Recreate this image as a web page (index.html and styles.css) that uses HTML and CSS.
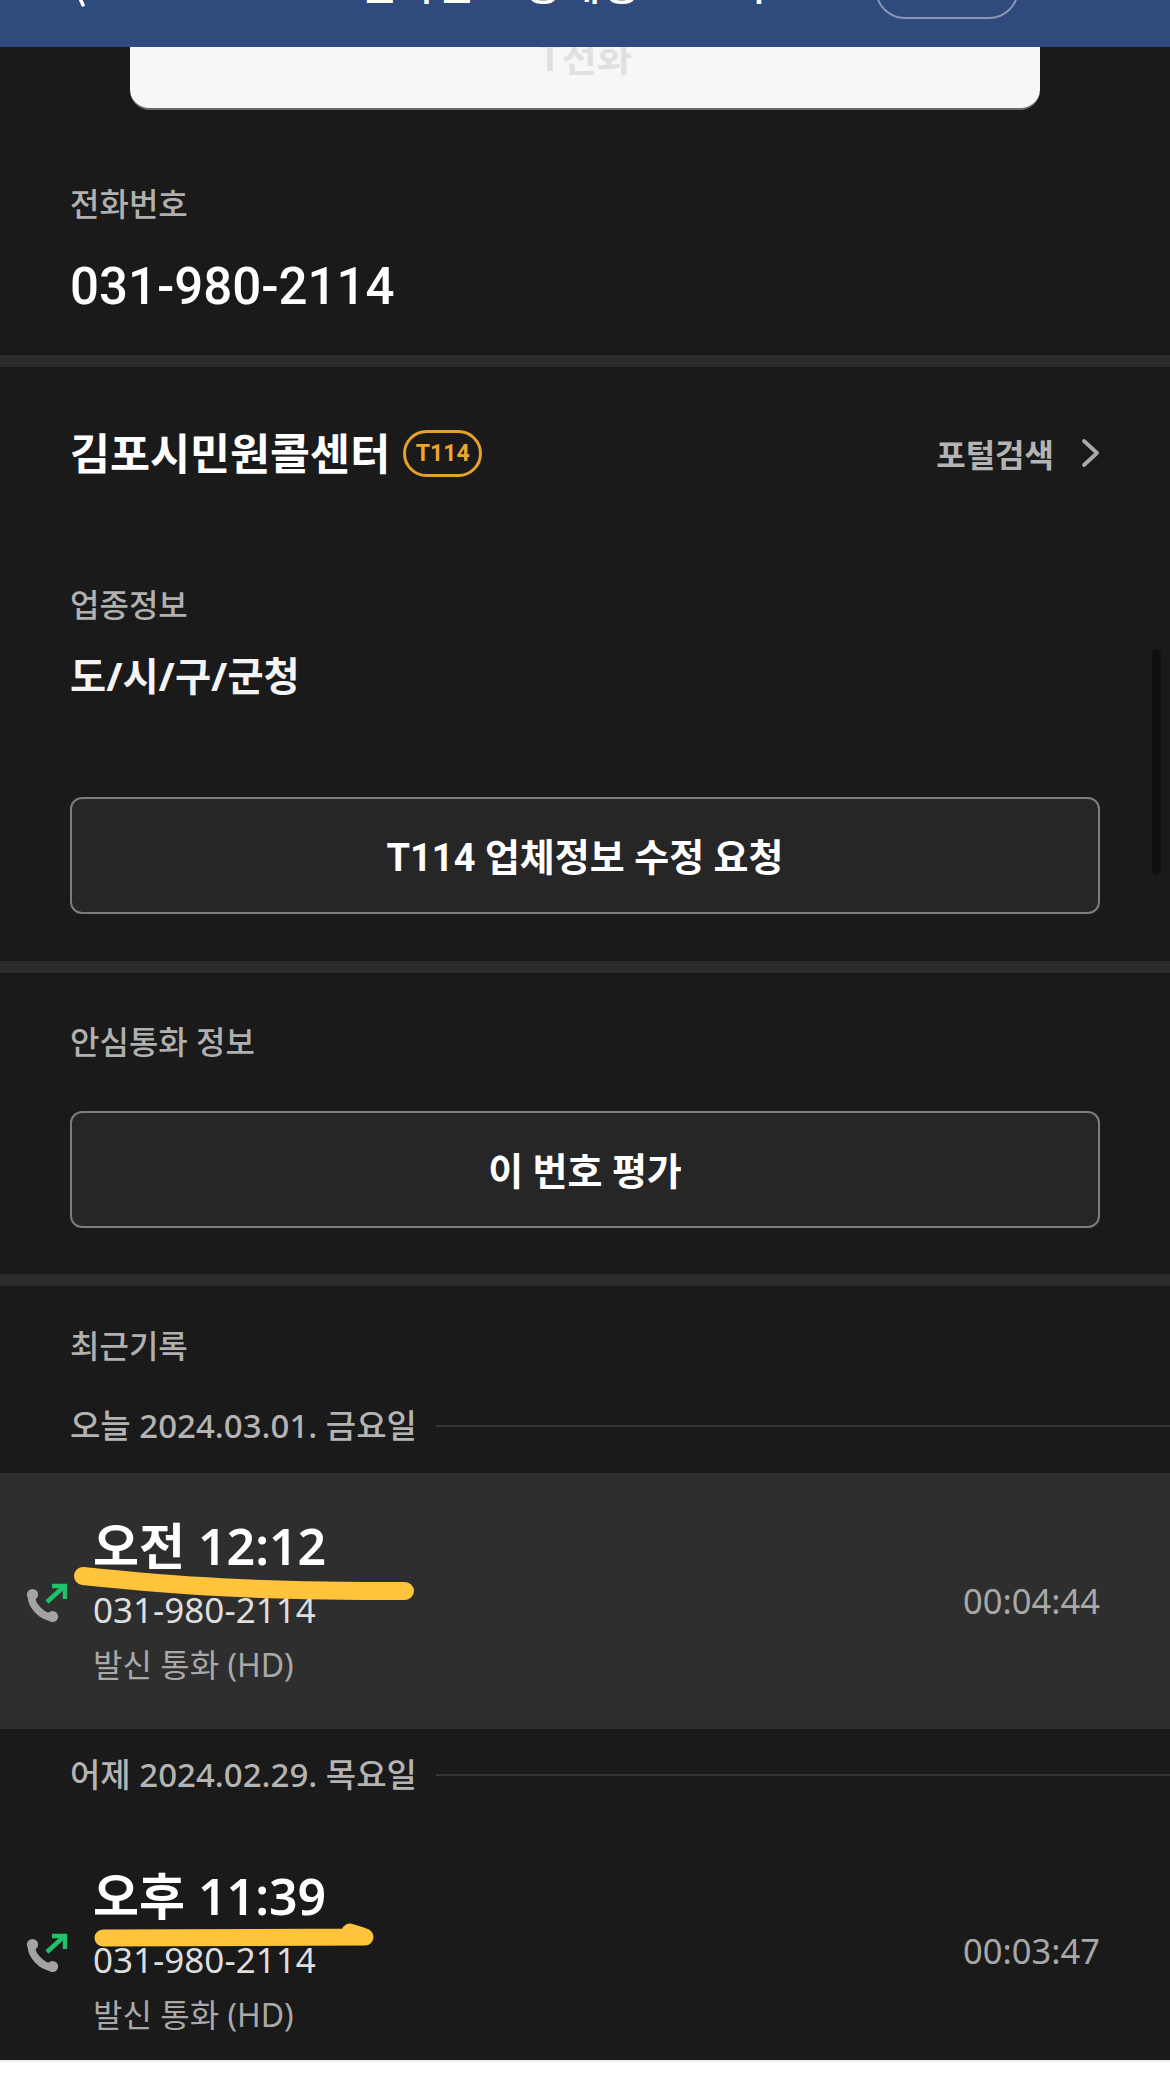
FILE: index.html
```html
<!DOCTYPE html>
<html lang="ko">
<head>
<meta charset="utf-8">
<title>통화 상세정보</title>
<link rel="stylesheet" href="styles.css">
</head>
<body>
<div class="screen">
  <header class="header">
    <svg class="back" width="14" height="34" viewBox="0 0 14 34"><path d="M12 32 L2 10" fill="none" stroke="#fff" stroke-width="3.5" stroke-linecap="round"/></svg>
    <div class="title">전화번호 상세정보 보기</div>
    <div class="head-btn"></div>
  </header>
  <div class="card"><span class="card-text">T전화</span></div>

  <section class="sec-number">
    <div class="label">전화번호</div>
    <div class="number">031-980-2114</div>
  </section>
  <div class="divider"></div>

  <section class="sec-biz">
    <div class="name-row">
      <div class="name">김포시민원콜센터</div>
      <span class="badge">T114</span>
      <div class="portal">포털검색
        <svg width="19" height="30" viewBox="0 0 19 30"><path d="M3 3 L16 15 L3 27" fill="none" stroke="#aaa" stroke-width="3.8" stroke-linecap="round" stroke-linejoin="round"/></svg>
      </div>
    </div>
    <div class="label biz-label">업종정보</div>
    <div class="value">도/시/구/군청</div>
    <div class="btn biz-btn">T114 업체정보 수정 요청</div>
  </section>
  <div class="divider"></div>

  <section class="sec-safe">
    <div class="label">안심통화 정보</div>
    <div class="btn safe-btn">이 번호 평가</div>
  </section>
  <div class="divider"></div>

  <section class="sec-recent">
    <div class="label">최근기록</div>
    <div class="date first"><span>오늘 2024.03.01. 금요일</span><i class="rule"></i></div>
    <div class="item active">
      <svg class="call" width="44" height="44" viewBox="0 0 44 44"><use href="#call"/></svg>
      <div class="info">
        <div class="time">오전 12:12</div>
        <div class="tel">031-980-2114</div>
        <div class="kind">발신 통화 (HD)</div>
      </div>
      <div class="dur">00:04:44</div>
      <svg class="mark mark-a" width="360" height="50" viewBox="0 0 360 50"><path d="M23 16 C120 26 190 31 345 31" fill="none" stroke="#ffc43c" stroke-width="18" stroke-linecap="round"/></svg>
    </div>
    <div class="date"><span>어제 2024.02.29. 목요일</span><i class="rule"></i></div>
    <div class="item">
      <svg class="call" width="44" height="44" viewBox="0 0 44 44"><use href="#call"/></svg>
      <div class="info">
        <div class="time">오후 11:39</div>
        <div class="tel">031-980-2114</div>
        <div class="kind">발신 통화 (HD)</div>
      </div>
      <div class="dur">00:03:47</div>
      <svg class="mark mark-b" width="300" height="50" viewBox="0 0 300 50"><path d="M21 23 L283 22 M268 17 L281 21" fill="none" stroke="#ffc43c" stroke-width="17" stroke-linecap="round"/></svg>
    </div>
  </section>
  <div class="scroll"></div>
</div>
<div class="foot"></div>
<svg class="defs" width="0" height="0">
  <symbol id="call" viewBox="0 0 44 44">
    <path d="M7.5 17 C7 26 17 37 28 38.5" fill="none" stroke="#a3a3a3" stroke-width="7.5"/>
    <circle cx="8.5" cy="15.5" r="5.6" fill="#a3a3a3"/>
    <circle cx="28.5" cy="37.5" r="5.6" fill="#a3a3a3"/>
    <path d="M23 23 L40 7.5 M28 7 H41 V20" fill="none" stroke="#1fc46a" stroke-width="4.4"/>
  </symbol>
</svg>
</body>
</html>
```
FILE: styles.css
```css
* { box-sizing: border-box; }
html, body { margin: 0; padding: 0; background: #fff; }
body {
  width: 1170px;
  height: 2080px;
  overflow: hidden;
  font-family: "Noto Sans", "Noto Sans CJK KR", sans-serif;
}
.screen {
  position: relative;
  height: 2060px;
  overflow: hidden;
  background: #1a1a1a;
  color: #f2f2f2;
}
.foot { height: 20px; background: #fff; border-top: 2px solid #eee; }
.defs { position: absolute; }

.header {
  display: flex;
  align-items: flex-end;
  height: 47px;
  overflow: hidden;
  padding: 0 151px 0 71px;
  background: #2f4a7c;
}
.back { flex: none; margin-bottom: 40px; }
.title {
  flex: none;
  margin: 0 0 33px 273px;
  font-size: 42px;
  line-height: 60px;
  font-weight: 500;
  color: #fff;
  white-space: nowrap;
}
.head-btn {
  flex: none;
  width: 144px;
  height: 70px;
  margin: 0 0 28px auto;
  border: 2px solid #8a97b5;
  border-radius: 30px;
}

.card {
  display: flex;
  justify-content: center;
  height: 63px;
  margin: 0 130px;
  background: #f7f7f7;
  border-bottom: 2px solid #6a6a6a;
  border-radius: 0 0 20px 20px;
  overflow: hidden;
}
.card-text {
  font-family: Roboto, "Noto Sans CJK KR", sans-serif;
  font-size: 38px;
  line-height: 22px;
  font-weight: 700;
  color: #e0e0e0;
}

.label {
  font-size: 32px;
  line-height: 40px;
  font-weight: 500;
  color: #b0b0b0;
}
.divider { height: 12px; background: #2c2c2c; }

.sec-number { height: 245px; padding: 74px 70px 0; }
.number {
  margin-top: 33px;
  font-family: Roboto, "Noto Sans CJK KR", sans-serif;
  font-size: 51px;
  line-height: 60px;
  font-weight: 500;
  color: #fff;
}

.sec-biz { height: 594px; padding: 61px 70px 0; }
.name-row { display: flex; align-items: center; height: 50px; }
.name { font-size: 43.5px; line-height: 50px; font-weight: 700; color: #fff; }
.badge {
  display: flex;
  align-items: center;
  justify-content: center;
  width: 79px;
  height: 47px;
  margin-left: 13px;
  border: 3px solid #e8a02c;
  border-radius: 24px;
  font-family: Roboto, sans-serif;
  font-size: 23px;
  font-weight: 700;
  color: #eda52c;
}
.portal {
  display: flex;
  align-items: center;
  gap: 27px;
  margin-left: auto;
  font-size: 32px;
  font-weight: 700;
  color: #b4b4b4;
}
.biz-label { margin-top: 107px; }
.value { margin-top: 26px; font-size: 39.3px; line-height: 50px; font-weight: 700; color: #f4f4f4; }
.btn {
  display: flex;
  align-items: center;
  justify-content: center;
  height: 117px;
  padding-bottom: 3px;
  background: #262626;
  border: 2.5px solid #7d7d7d;
  border-radius: 12px;
  font-family: Roboto, "Noto Sans CJK KR", sans-serif;
  font-size: 38px;
  font-weight: 700;
  color: #fff;
}
.biz-btn { margin-top: 96px; }

.sec-safe { height: 301px; padding: 49px 70px 0; }
.safe-btn { margin-top: 49px; }

.sec-recent { padding-top: 40px; }
.sec-recent > .label { padding-left: 70px; }
.date {
  display: flex;
  align-items: center;
  gap: 19px;
  height: 40px;
  margin: 26px 0 28px;
  padding-left: 70px;
  font-size: 33px;
  line-height: 40px;
  font-weight: 500;
  color: #b4b4b4;
}
.date.first { margin: 40px 0 27px; }
.rule { flex: 1; height: 2px; background: #353535; }

.item {
  position: relative;
  display: flex;
  align-items: center;
  height: 256px;
  padding: 0 70px 0 24px;
}
.item.active { background: #2e2e2e; }
.call { flex: none; margin-right: 25px; }
.info { flex: 1; }
.time { font-size: 50px; line-height: 60px; font-weight: 600; color: #fff; }
.tel { font-size: 35px; line-height: 68px; color: #dedede; }
.kind { font-size: 32px; line-height: 42px; color: #a9a9a9; }
.dur { font-size: 34.5px; color: #a8a8a8; padding-bottom: 2px; }

.mark { position: absolute; }
.mark-a { left: 60px; top: 87px; }
.mark-b { left: 82px; top: 92px; }

.scroll {
  position: absolute;
  left: 1152px;
  top: 649px;
  width: 9px;
  height: 226px;
  background: #101010;
  border-radius: 5px;
}
```
